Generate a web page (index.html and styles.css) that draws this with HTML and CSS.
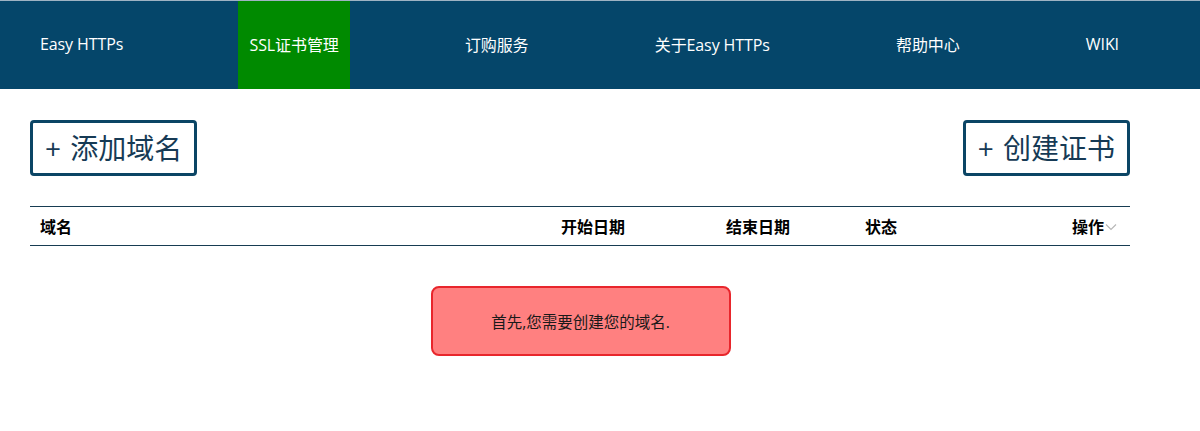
FILE: index.html
```html
<!DOCTYPE html>
<html lang="zh-CN">
<head>
<meta charset="utf-8">
<title>Easy HTTPs</title>
<link rel="stylesheet" href="styles.css">
</head>
<body>
<header class="topbar">
  <nav class="nav">
    <a class="nav-item">Easy HTTPs</a>
    <a class="nav-item active">SSL证书管理</a>
    <a class="nav-item">订购服务</a>
    <a class="nav-item">关于Easy HTTPs</a>
    <a class="nav-item">帮助中心</a>
    <a class="nav-item">WIKI</a>
  </nav>
</header>
<main class="main">
  <div class="actions">
    <button class="btn">+ 添加域名</button>
    <button class="btn">+ 创建证书</button>
  </div>
  <div class="table-head">
    <div class="col col-domain">域名</div>
    <div class="col col-start">开始日期</div>
    <div class="col col-end">结束日期</div>
    <div class="col col-status">状态</div>
    <div class="col col-op">操作<svg class="chev" width="12" height="8" viewBox="0 0 12 8"><path d="M1 1.5 L6 6.5 L11 1.5" fill="none" stroke="#b8b8b8" stroke-width="1.2"/></svg></div>
  </div>
  <div class="notice-wrap">
    <div class="notice">首先,您需要创建您的域名.</div>
  </div>
</main>
</body>
</html>
```
FILE: styles.css
```css
* { box-sizing: border-box; }
html, body { margin: 0; padding: 0; background: #fff; }
body {
  font-family: "Open Sans", "Noto Sans CJK SC", sans-serif;
  color: #111;
}
.topbar {
  background: #05466a;
  border-top: 1px solid #9fb3c3;
  height: 89px;
}
.nav {
  display: flex;
  justify-content: space-between;
  align-items: stretch;
  height: 88px;
  margin: 0 70px 0 29px;
}
.nav-item {
  display: flex;
  align-items: center;
  padding: 0 11px 2px;
  color: #fff;
  font-size: 16px;
  letter-spacing: -0.1px;
  text-decoration: none;
}
.nav-item.active { background: #008a00; }
.main { padding: 0 70px 0 30px; }
.actions {
  display: flex;
  justify-content: space-between;
  padding-top: 31px;
}
.btn {
  height: 56px;
  padding: 0 12px 2px 12px;
  border: 3px solid #0b4565;
  border-radius: 4px;
  background: #fff;
  color: #163a55;
  font-family: "Open Sans", "Noto Sans CJK SC", sans-serif;
  font-size: 28px;
  word-spacing: 2px;
}
.table-head {
  display: flex;
  align-items: center;
  margin-top: 30px;
  height: 40px;
  border-top: 1px solid #173c52;
  border-bottom: 1px solid #173c52;
  font-size: 16px;
  font-weight: bold;
  color: #000;
}
.col { white-space: nowrap; }
.col-domain { padding-left: 10px; flex: 1; }
.col-start { width: 165px; }
.col-end { width: 139px; }
.col-status { width: 207px; }
.col-op { width: 58px; display: flex; align-items: center; }
.chev { margin-left: 1px; margin-top: 1px; }
.notice-wrap {
  display: flex;
  justify-content: center;
  padding-top: 40px;
  padding-left: 1px;
}
.notice {
  width: 300px;
  height: 70px;
  display: flex;
  align-items: center;
  justify-content: center;
  background: #ff8080;
  border: 2px solid #e8262c;
  border-radius: 8px;
  font-size: 15.5px;
  color: #1a1a1a;
}
```
